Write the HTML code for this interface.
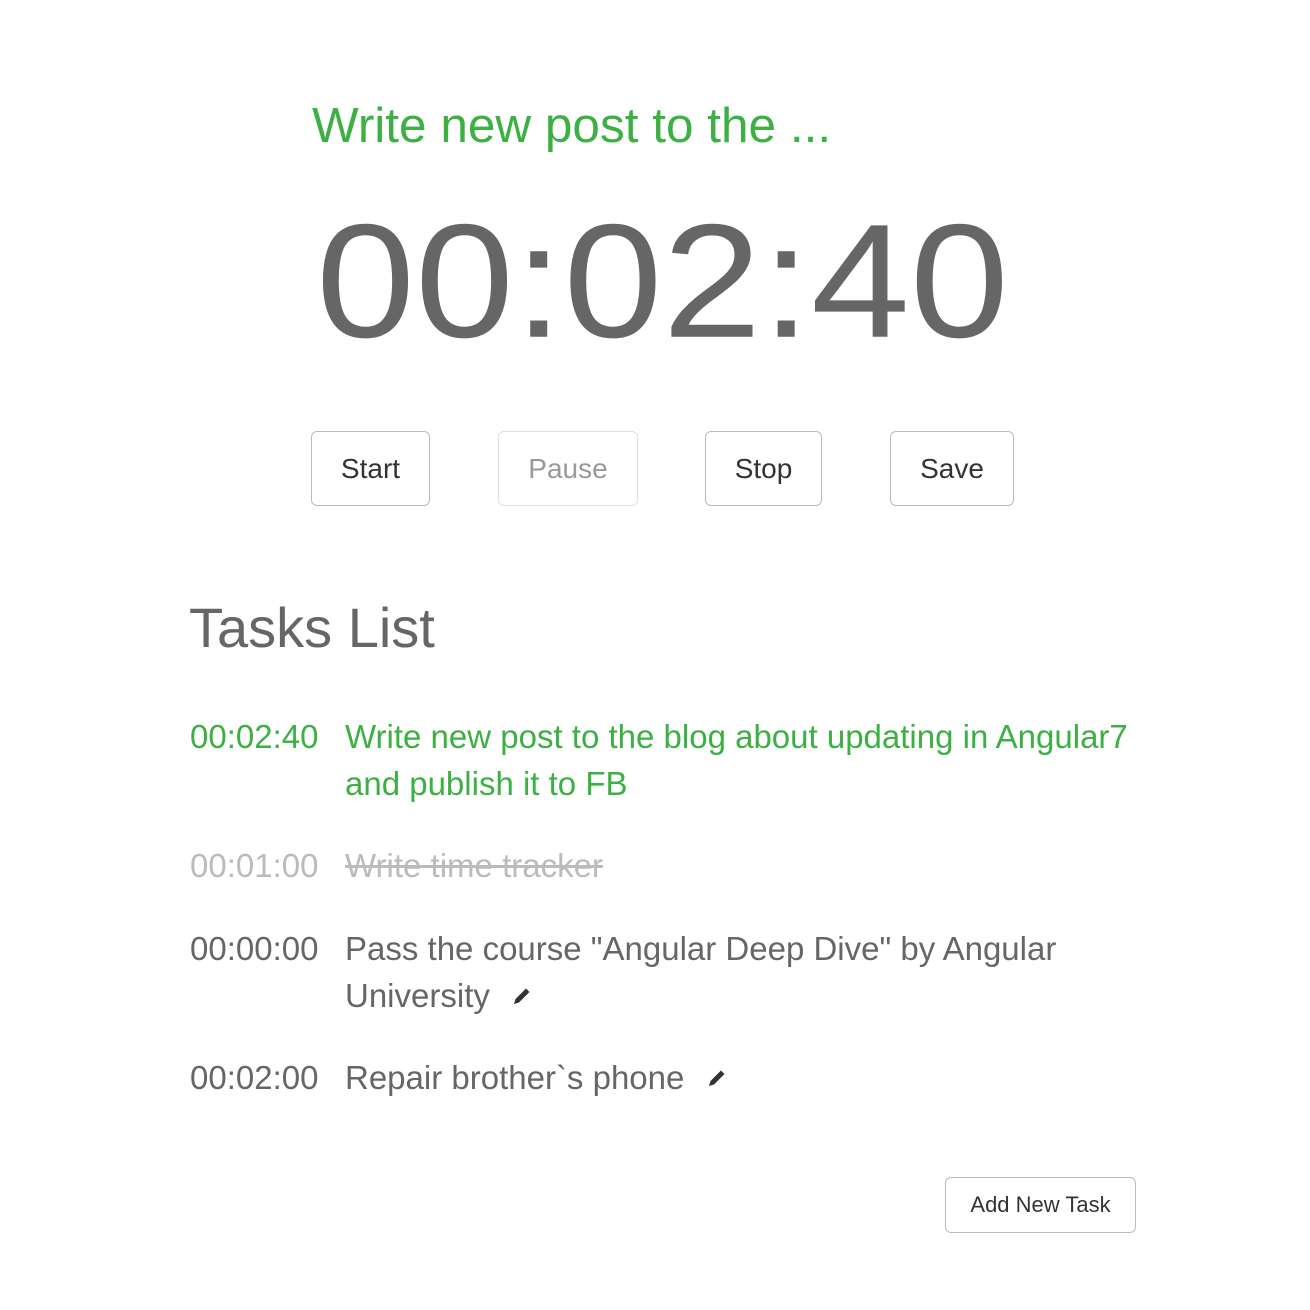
<!DOCTYPE html>
<html><head><style>
body{margin:0;width:1310px;height:1310px;background:#fff;font-family:"Liberation Sans",Arial,sans-serif;position:relative;overflow:hidden}
.a{position:absolute;white-space:nowrap}
.btn{position:absolute;border:1px solid #bbb;border-radius:6px;box-sizing:border-box;display:flex;align-items:center;justify-content:center;font-size:28px;color:#333;background:#fff}
.g{color:#3cb043}
.row{position:absolute;left:190px;font-size:33px;line-height:47px;color:#666}
.row .t{position:absolute;left:0;top:0}
.row .d{position:absolute;left:155px;top:0;white-space:nowrap}
</style></head><body>
<div class="a g" style="left:312px;top:96px;font-size:49.5px;line-height:60px">Write new post to the ...</div>
<div class="a" style="left:316px;top:175px;font-size:178px;line-height:200px;color:#666;transform:scaleY(0.91);transform-origin:0 170px">00:02:40</div>
<div class="btn" style="left:311px;top:431px;width:119px;height:75px">Start</div>
<div class="btn" style="left:498px;top:431px;width:140px;height:75px;color:#999;border-color:#ddd">Pause</div>
<div class="btn" style="left:705px;top:431px;width:117px;height:75px">Stop</div>
<div class="btn" style="left:890px;top:431px;width:124px;height:75px">Save</div>
<div class="a" style="left:189px;top:596px;font-size:56px;line-height:64px;color:#666">Tasks List</div>
<div class="row g" style="top:713px;color:#3cb043"><span class="t">00:02:40</span><span class="d">Write new post to the blog about updating in Angular7<br>and publish it to FB</span></div>
<div class="row" style="top:842px;color:#bbb"><span class="t">00:01:00</span><span class="d" style="text-decoration:line-through">Write time tracker</span></div>
<div class="row" style="top:925px"><span class="t">00:00:00</span><span class="d">Pass the course "Angular Deep Dive" by Angular<br>University <svg width="22" height="22" viewBox="0 0 22 22" style="margin-left:12px"><path d="M3 19l1.5-5L15 3.5l3.5 3.5L8 17.5z" fill="#333"/></svg></span></div>
<div class="row" style="top:1054px"><span class="t">00:02:00</span><span class="d">Repair brother`s phone <svg width="22" height="22" viewBox="0 0 22 22" style="margin-left:12px"><path d="M3 19l1.5-5L15 3.5l3.5 3.5L8 17.5z" fill="#333"/></svg></span></div>
<div class="btn" style="left:945px;top:1177px;width:191px;height:56px;font-size:22px">Add New Task</div>
</body></html>
